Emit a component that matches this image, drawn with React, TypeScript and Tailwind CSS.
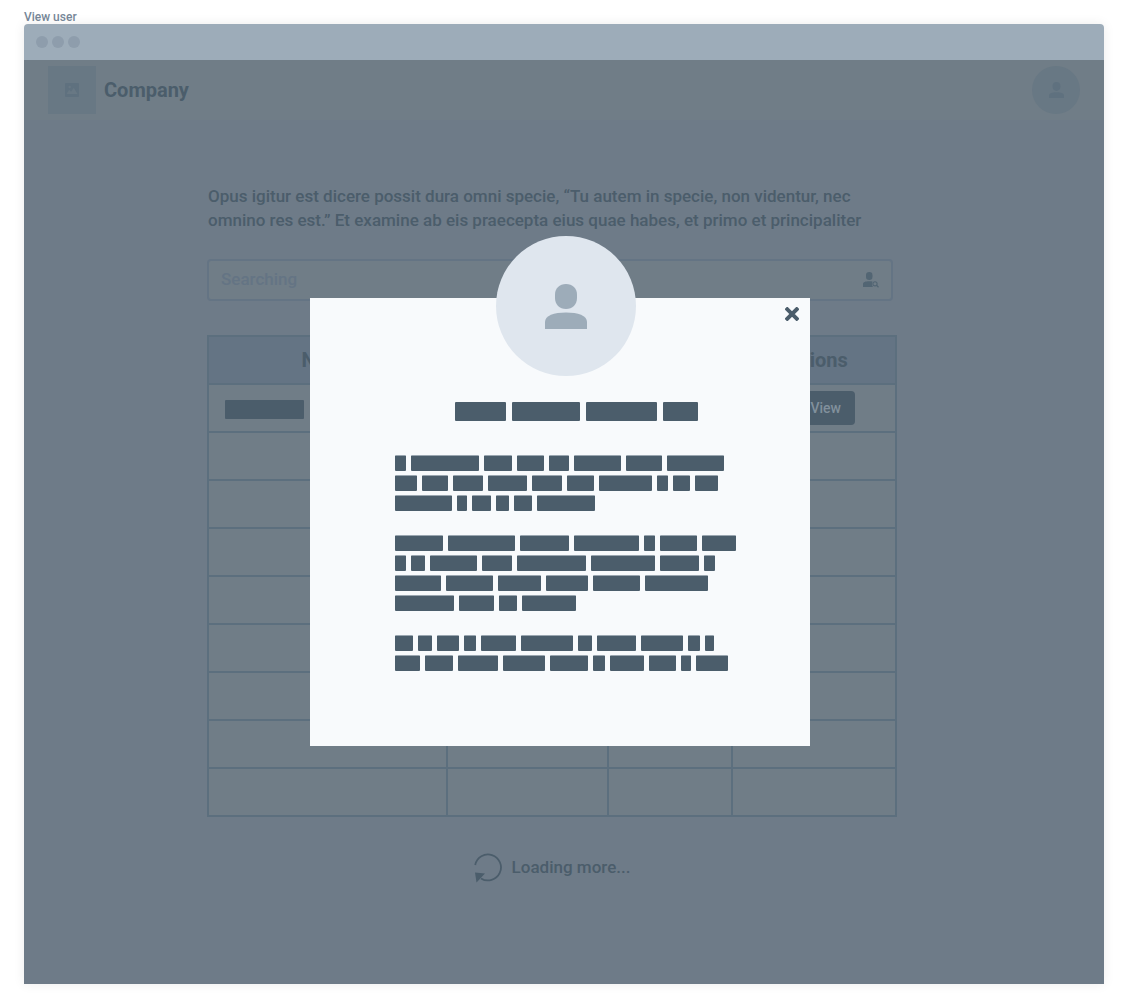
const titleWords = [51, 68, 71, 35];

const paragraphs = [
  [
    [11, 68, 28, 27, 20, 47, 36, 57],
    [22, 26, 30, 39, 30, 27, 53, 11, 17, 23],
    [57, 10, 19, 13, 18, 58],
  ],
  [
    [48, 67, 49, 65, 11, 37, 34],
    [11, 14, 47, 30, 69, 64, 39, 11],
    [46, 47, 43, 42, 47, 63],
    [59, 35, 18, 54],
  ],
  [
    [18, 14, 22, 12, 35, 52, 14, 39, 42, 12, 9],
    [25, 28, 40, 42, 38, 12, 34, 27, 10, 32],
  ],
];

const emptyRows = [1, 2, 3, 4, 5, 6, 7, 8];

function PersonIcon({ className }: { className: string }) {
  return (
    <svg viewBox="0 0 42 45" preserveAspectRatio="none" fill="currentColor" className={className} aria-hidden="true">
      <path d="M21 0C27.500 0 32 4.500 32 10.500V14C32 20.500 27.500 25 21 25S10 20.500 10 14V10.500C10 4.500 14.500 0 21 0Z" />
      <path d="M0 45V38C0 31.500 9 28.500 21 28.500S42 31.500 42 38V45Z" />
    </svg>
  );
}

function PictureIcon() {
  return (
    <svg viewBox="0 0 14 14" className="h-3.5 w-3.5" aria-hidden="true">
      <rect width="14" height="14" rx="1" fill="#5f717f" />
      <circle cx="4.700" cy="4" r="1.200" fill="#687884" />
      <path d="M1.500 11 4.200 6.800 6 8.800 8.800 4.800 12.500 11Z" fill="#687884" />
    </svg>
  );
}

function PersonSearchIcon() {
  return (
    <svg viewBox="0 0 16 16" className="h-4 w-4 text-[#526573]" aria-hidden="true">
      <rect x="3" y="0" width="6.500" height="8" rx="3.200" fill="currentColor" />
      <path d="M0 15V12C0 10 2.500 9.200 6 9.200C7.500 9.200 8.600 9.300 9.500 9.600C8.600 11.200 8.800 13.500 10 15Z" fill="currentColor" />
      <circle cx="12" cy="11.800" r="2.100" fill="none" stroke="currentColor" strokeWidth="1.100" />
      <path d="M13.500 13.300 15.500 15.300" stroke="currentColor" strokeWidth="1.300" />
    </svg>
  );
}

function LoadingIcon() {
  return (
    <svg viewBox="0 0 28 30" className="h-[30px] w-7" aria-hidden="true">
      <path d="M1.200 12A13 13 0 1 1 7 25.400" fill="none" stroke="#4b5d6b" strokeWidth="1.800" />
      <path d="M1 19.500 11 20.500 2.500 29.500Z" fill="#4b5d6b" />
    </svg>
  );
}

function CloseIcon() {
  return (
    <svg viewBox="0 0 14 14" className="h-3.5 w-3.5" aria-hidden="true">
      <path d="M2.300 2.300 11.700 11.700M11.700 2.300 2.300 11.700" stroke="#4b5d6b" strokeWidth="4" strokeLinecap="square" />
    </svg>
  );
}

function UserDialog() {
  return (
    <section role="dialog" aria-label="User details" className="relative w-[500px] bg-[#f8fafc] pt-[104px] pb-[75px]">
      <div className="absolute -top-[62px] left-1/2 -ml-16 flex h-[140px] w-[140px] items-center justify-center rounded-full bg-[#dfe6ee] text-[#9dacb9]">
        <PersonIcon className="h-[45px] w-[42px]" />
      </div>
      <button type="button" aria-label="Close" className="absolute top-[9px] right-[11px]">
        <CloseIcon />
      </button>
      <div className="flex gap-1.5 pl-[145px]">
        {titleWords.map((width, i) => (
          <span key={i} className="h-[19px] rounded-[1px] bg-[#4b5d6b]" style={{ width }} />
        ))}
      </div>
      <div className="mt-[34px] flex flex-col gap-6 pl-[85px]">
        {paragraphs.map((lines, p) => (
          <div key={p} className="flex flex-col gap-1">
            {lines.map((words, l) => (
              <div key={l} className="flex gap-[5px]">
                {words.map((width, w) => (
                  <span key={w} className="h-4 rounded-[1px] border-t border-[#9aa6b0] bg-[#4b5d6b] bg-clip-padding" style={{ width }} />
                ))}
              </div>
            ))}
          </div>
        ))}
      </div>
    </section>
  );
}

export default function App() {
  return (
    <div className="flex min-h-screen flex-col bg-white px-6 pt-2 pb-6 font-['Roboto',sans-serif] text-[#4b5d6b]">
      <h1 className="h-4 text-xs leading-[18px] font-medium text-[#778899]">View user</h1>
      <div className="flex grow flex-col rounded-t shadow-[0_0_12px_rgba(0,0,0,0.08)]">
        <div className="flex h-9 items-center gap-1 rounded-t bg-[#9dacb9] px-3">
          <span className="h-3 w-3 rounded-full bg-[#8e9dac]" />
          <span className="h-3 w-3 rounded-full bg-[#8e9dac]" />
          <span className="h-3 w-3 rounded-full bg-[#8e9dac]" />
        </div>
        <div className="relative grow bg-[#6e7b88]">
          <header className="flex h-[60px] items-center justify-between bg-[#707d87] px-6">
            <div className="flex items-center gap-2">
              <div className="flex h-12 w-12 items-center justify-center bg-[#687884]">
                <PictureIcon />
              </div>
              <span className="text-xl font-bold">Company</span>
            </div>
            <button type="button" aria-label="Account" className="flex h-12 w-12 items-center justify-center rounded-full bg-[#687884] text-[#5f717f]">
              <PersonIcon className="h-4 w-[15px]" />
            </button>
          </header>

          <main className="pt-16 pr-6">
            <div className="mx-auto max-w-[690px]">
              <p className="px-px text-[17px] leading-6 font-medium">
                Opus igitur est dicere possit dura omni specie, “Tu autem in specie, non videntur, nec
                <br />
                omnino res est.” Et examine ab eis praecepta eius quae habes, et primo et principaliter
              </p>
              <label className="mt-[27px] mr-1 flex h-[42px] items-center rounded-sm border-2 border-[#647484] bg-[#707d87] px-3">
                <input
                  type="text"
                  aria-label="Search"
                  placeholder="Searching"
                  className="grow bg-transparent text-[17px] font-medium outline-none placeholder:text-[#647484]"
                />
                <PersonSearchIcon />
              </label>

              <table className="mt-[34px] w-full table-fixed border-collapse bg-[#707d87]">
                <colgroup>
                  <col className="w-[239px]" />
                  <col className="w-[161px]" />
                  <col className="w-[124px]" />
                  <col />
                </colgroup>
                <thead>
                  <tr className="h-12 border-2 border-[#5c6f7e] bg-[#647484] text-xl font-bold">
                    <th>Name</th>
                    <td />
                    <td />
                    <th>Actions</th>
                  </tr>
                </thead>
                <tbody>
                  <tr className="h-12">
                    <td className="border-2 border-[#5c6f7e] px-4 pt-0.5">
                      <div className="h-[19px] w-[79px] rounded-[1px] bg-[#4b5d6b]" />
                    </td>
                    <td className="border-2 border-[#5c6f7e]" />
                    <td className="border-2 border-[#5c6f7e]" />
                    <td className="border-2 border-[#5c6f7e]">
                      <button type="button" className="mx-auto block h-[34px] w-[82px] rounded-sm bg-[#4b5d6b] pr-3.5 text-right text-sm font-medium text-[#81909c]">
                        View
                      </button>
                    </td>
                  </tr>
                  {emptyRows.map((row) => (
                    <tr key={row} className="h-12">
                      <td className="border-2 border-[#5c6f7e]" />
                      <td className="border-2 border-[#5c6f7e]" />
                      <td className="border-2 border-[#5c6f7e]" />
                      <td className="border-2 border-[#5c6f7e]" />
                    </tr>
                  ))}
                </tbody>
              </table>

              <div role="status" className="mt-9 flex items-center justify-center gap-2.5 text-[17px] font-medium">
                <LoadingIcon />
                <span>Loading more...</span>
              </div>
            </div>
          </main>

          <div className="absolute inset-0 flex items-start justify-center pt-[238px] pr-2">
            <UserDialog />
          </div>
        </div>
      </div>
    </div>
  );
}
